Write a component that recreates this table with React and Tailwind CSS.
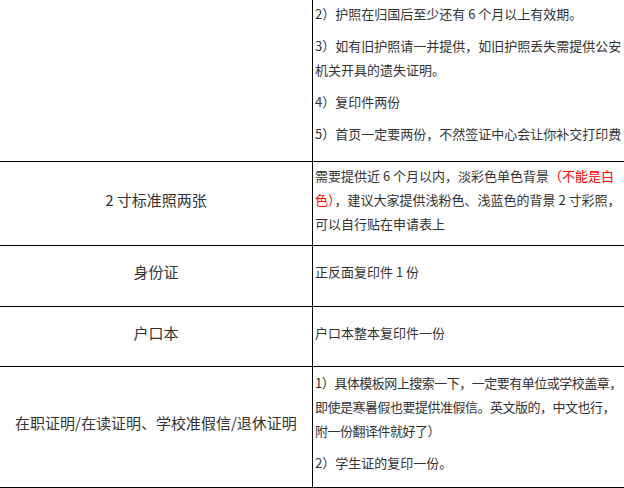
export default function App() {
  const font = { fontFamily: '"Noto Sans CJK SC", "Microsoft YaHei", sans-serif' };
  const P = ({ children, className = "" }) => <p className={"mb-2 leading-[24px] whitespace-nowrap " + className}>{children}</p>;
  return (
    <div className="w-[624px] h-[488px] overflow-hidden bg-white text-[#333]" style={font}>
      <div className="w-[700px]">
        {/* row 1 */}
        <div className="flex h-[162px] border-b border-black">
          <div className="w-[313px] shrink-0 border-r border-black"></div>
          <div className="flex-1 pl-[2px] pt-[2px] text-[13px]">
            <P>2）护照在归国后至少还有 6 个月以上有效期。</P>
            <P>3）如有旧护照请一并提供，如旧护照丢失需提供公安<br />机关开具的遗失证明。</P>
            <P>4）复印件两份</P>
            <P>5）首页一定要两份，不然签证中心会让你补交打印费</P>
          </div>
        </div>
        {/* row 2 */}
        <div className="flex h-[84px] border-b border-black">
          <div className="w-[313px] shrink-0 border-r border-black flex items-center justify-center text-[15px]">
            <p className="mb-2 leading-[24px]">2 寸标准照两张</p>
          </div>
          <div className="flex-1 pl-[2px] flex items-center text-[13px]">
            <P>
              需要提供近 6 个月以内，淡彩色单色背景<span className="text-[#ff0000]">（不能是白<br />色）</span>，建议大家提供浅粉色、浅蓝色的背景 2 寸彩照，<br />可以自行贴在申请表上
            </P>
          </div>
        </div>
        {/* row 3 */}
        <div className="flex h-[61px] border-b border-black">
          <div className="w-[313px] shrink-0 border-r border-black flex items-center justify-center text-[15px]">
            <p className="mb-2 leading-[24px]">身份证</p>
          </div>
          <div className="flex-1 pl-[2px] flex items-center text-[13px]">
            <P>正反面复印件 1 份</P>
          </div>
        </div>
        {/* row 4 */}
        <div className="flex h-[60px] border-b border-black">
          <div className="w-[313px] shrink-0 border-r border-black flex items-center justify-center text-[15px]">
            <p className="mb-2 leading-[24px]">户口本</p>
          </div>
          <div className="flex-1 pl-[2px] flex items-center text-[13px]">
            <P>户口本整本复印件一份</P>
          </div>
        </div>
        {/* row 5 */}
        <div className="flex h-[121px] border-b border-black">
          <div className="w-[313px] shrink-0 border-r border-black flex items-center justify-center text-[15px]">
            <p className="mb-2 leading-[24px]">在职证明/在读证明、学校准假信/退休证明</p>
          </div>
          <div className="flex-1 pl-[2px] flex flex-col justify-center text-[13px]">
            <P className="tracking-[-0.5px]">1）具体模板网上搜索一下，一定要有单位或学校盖章，<br />即使是寒暑假也要提供准假信。英文版的，中文也行，<br />附一份翻译件就好了）</P>
            <P>2）学生证的复印一份。</P>
          </div>
        </div>
        <div className="flex h-[20px]">
          <div className="w-[313px] shrink-0 border-r border-black"></div>
        </div>
      </div>
    </div>
  );
}
